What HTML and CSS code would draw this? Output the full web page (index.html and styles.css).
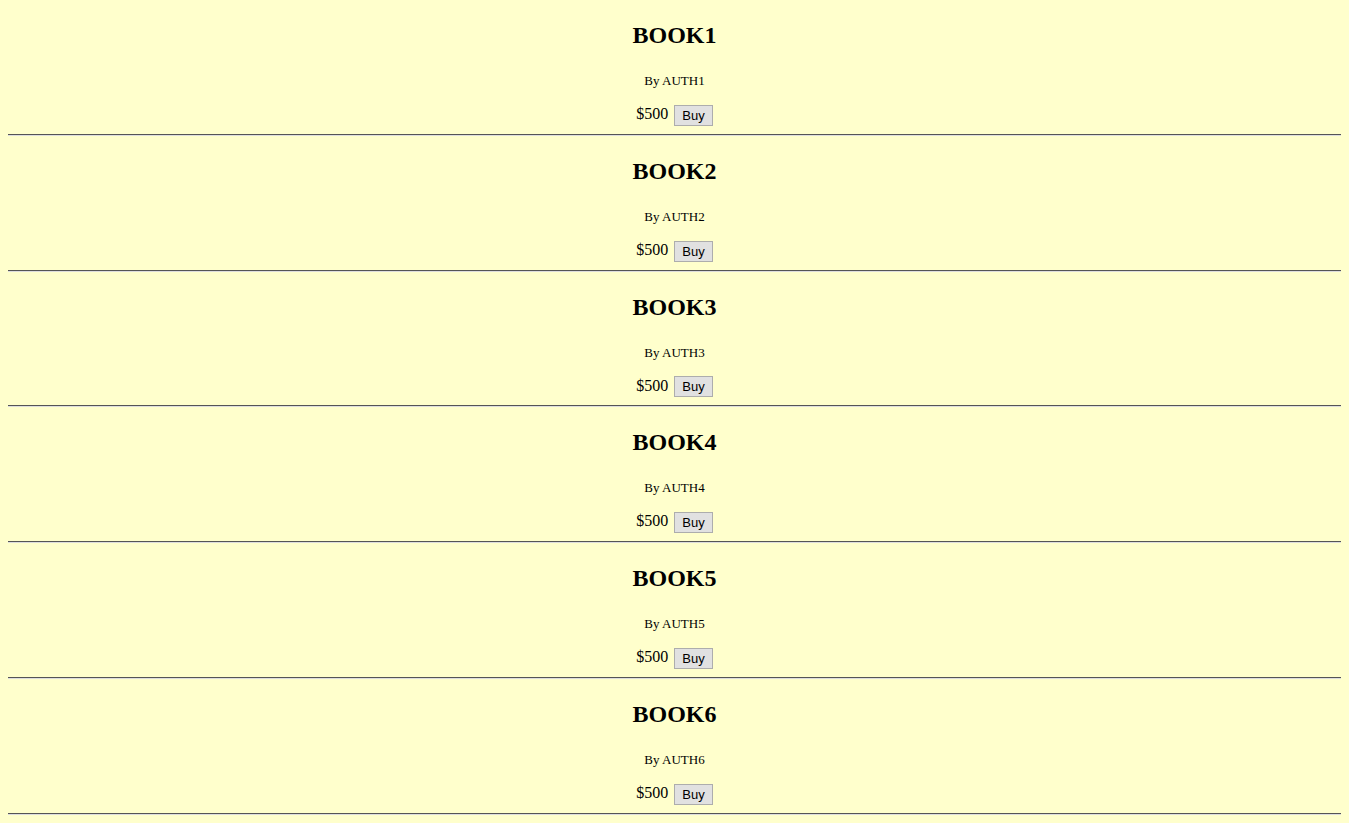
FILE: index.html
```html
<!DOCTYPE html>
<html>
<head>
<meta charset="utf-8">
<title>Books</title>
<link rel="stylesheet" href="styles.css">
</head>
<body>
<div class="book">
  <h2 class="title">BOOK1</h2>
  <p class="author">By AUTH1</p>
  <div class="price">$500 <button class="buy">Buy</button></div>
</div>
<hr class="sep">
<div class="book">
  <h2 class="title">BOOK2</h2>
  <p class="author">By AUTH2</p>
  <div class="price">$500 <button class="buy">Buy</button></div>
</div>
<hr class="sep">
<div class="book">
  <h2 class="title">BOOK3</h2>
  <p class="author">By AUTH3</p>
  <div class="price">$500 <button class="buy">Buy</button></div>
</div>
<hr class="sep">
<div class="book">
  <h2 class="title">BOOK4</h2>
  <p class="author">By AUTH4</p>
  <div class="price">$500 <button class="buy">Buy</button></div>
</div>
<hr class="sep">
<div class="book">
  <h2 class="title">BOOK5</h2>
  <p class="author">By AUTH5</p>
  <div class="price">$500 <button class="buy">Buy</button></div>
</div>
<hr class="sep">
<div class="book">
  <h2 class="title">BOOK6</h2>
  <p class="author">By AUTH6</p>
  <div class="price">$500 <button class="buy">Buy</button></div>
</div>
<hr class="sep">
</body>
</html>
```
FILE: styles.css
```css
html, body {
  background: #ffffcc;
}
body {
  margin: 0;
  padding: 0 8px;
  font-family: "Liberation Serif", "Times New Roman", serif;
  color: #000;
}
.book {
  text-align: center;
}
.title {
  font-size: 24px;
  font-weight: bold;
  margin: 22px 0 20px;
}
.author {
  font-size: 13px;
  margin: 24px 0 14px;
}
.price {
  font-size: 16px;
  line-height: 21px;
}
.buy {
  font-family: "Liberation Sans", Arial, sans-serif;
  font-size: 13px;
  background: #e1e1e1;
  border: 1px solid #adadad;
  border-radius: 0;
  padding: 1px 7px;
  height: 21px;
  color: #000;
  margin-left: 2px;
  vertical-align: middle;
}
.sep {
  margin: 8px 0;
  border: 0;
  border-top: 1px solid #555;
  border-bottom: 1px solid #ddd;
  height: 0;
}
```
